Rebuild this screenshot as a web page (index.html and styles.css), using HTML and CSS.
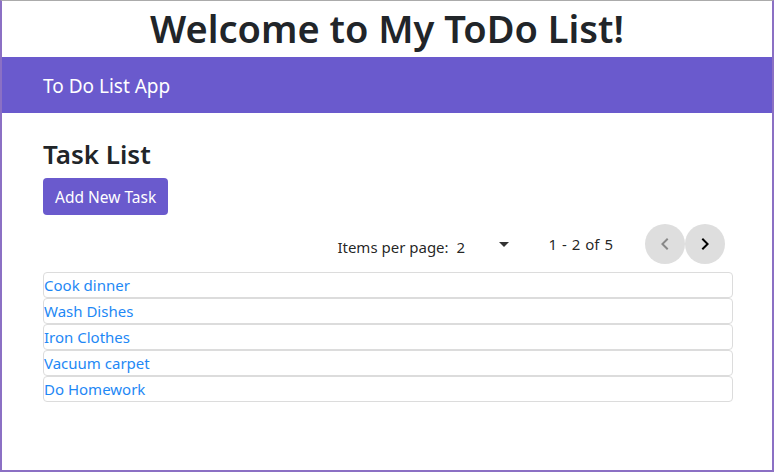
FILE: index.html
```html
<!DOCTYPE html>
<html lang="en">
<head>
<meta charset="utf-8">
<title>ToDo List</title>
<link rel="stylesheet" href="styles.css">
</head>
<body>
<div class="frame">
  <h1 class="title">Welcome to My ToDo List!</h1>
  <nav class="navbar"><span class="brand">To Do List App</span></nav>
  <main class="content">
    <h2 class="heading">Task List</h2>
    <button class="btn-add" type="button">Add New Task</button>
    <div class="paginator">
      <span class="page-size-label">Items per page:</span>
      <div class="page-size-select">
        <span class="page-size-value">2</span>
        <span class="caret"></span>
      </div>
      <span class="range-label">1 - 2 of 5</span>
      <button class="nav-btn disabled" type="button" aria-label="Previous page">
        <svg viewBox="0 0 24 24" width="24" height="24"><path d="M15.41 7.41L14 6l-6 6 6 6 1.41-1.41L10.83 12z"/></svg>
      </button>
      <button class="nav-btn" type="button" aria-label="Next page">
        <svg viewBox="0 0 24 24" width="24" height="24"><path d="M10 6L8.59 7.41 13.17 12l-4.58 4.59L10 18l6-6z"/></svg>
      </button>
    </div>
    <ul class="task-list">
      <li class="task"><a href="#">Cook dinner</a></li>
      <li class="task"><a href="#">Wash Dishes</a></li>
      <li class="task"><a href="#">Iron Clothes</a></li>
      <li class="task"><a href="#">Vacuum carpet</a></li>
      <li class="task"><a href="#">Do Homework</a></li>
    </ul>
  </main>
</div>
</body>
</html>
```
FILE: styles.css
```css
* { box-sizing: border-box; }
html, body { margin: 0; padding: 0; background: #fff; }
body {
  font-family: "Noto Sans", "Open Sans", sans-serif;
  color: #212529;
}
.frame {
  width: 774px;
  height: 472px;
  border-top: 1px solid #ababab;
  border-left: 2px solid #8b70c4;
  border-right: 2px solid #8b70c4;
  border-bottom: 2px solid #8b70c4;
  overflow: hidden;
}
.title {
  margin: 0;
  height: 56px;
  line-height: 54px;
  text-align: center;
  font-size: 38px;
  font-weight: 600;
  color: #212529;
}
.navbar {
  height: 56px;
  background: #6a5acd;
  display: flex;
  align-items: center;
  padding-left: 41px;
}
.brand {
  color: #fff;
  font-size: 19px;
  margin-top: 2px;
}
.content {
  padding: 24px 39px 0 41px;
}
.heading {
  margin: 0 0 7px;
  font-size: 26px;
  font-weight: 600;
  line-height: 34px;
}
.btn-add {
  display: block;
  height: 37px;
  padding: 0 12px;
  border: none;
  border-radius: 4px;
  background: #6a5acd;
  color: #fff;
  font-family: inherit;
  font-size: 15.5px;
}
.paginator {
  height: 57px;
  display: flex;
  align-items: center;
  justify-content: flex-end;
  padding-right: 8px;
  font-size: 15px;
  color: rgba(0,0,0,0.87);
}
.page-size-label { margin-top: 6px; }
.page-size-select {
  width: 60px;
  margin-left: 4px;
  margin-top: 6px;
  display: flex;
  align-items: center;
  justify-content: space-between;
  padding: 0 4px;
}
.caret {
  width: 0;
  height: 0;
  border-left: 5px solid transparent;
  border-right: 5px solid transparent;
  border-top: 5px solid rgba(0,0,0,0.8);
  margin-top: -4px;
}
.range-label { margin: 0 32px 0 36px; word-spacing: 1px; }
.nav-btn {
  width: 40px;
  height: 40px;
  border: none;
  border-radius: 50%;
  background: #dedede;
  padding: 0;
  display: flex;
  align-items: center;
  justify-content: center;
}
.nav-btn svg { fill: #000; }
.nav-btn.disabled svg { fill: #888; }
.task-list {
  list-style: none;
  margin: 0;
  padding: 0;
}
.task {
  height: 26px;
  border: 1px solid #dcdcdc;
  border-radius: 4px;
  line-height: 24px;
  font-size: 15px;
}
.task a {
  color: #1e88f5;
  text-decoration: none;
}
```
